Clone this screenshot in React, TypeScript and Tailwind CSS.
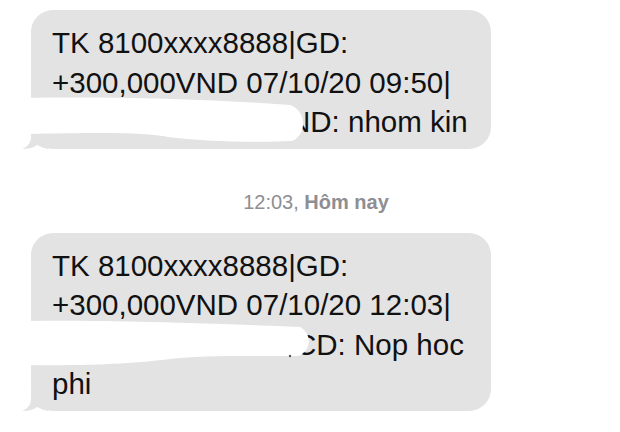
import React from "react";

const font = { fontFamily: '"Liberation Sans", Arial, sans-serif' };

function Tail() {
  return (
    <svg className="absolute left-[-9px] bottom-0 w-[26px] h-[20px]" viewBox="0 0 26 20">
      <path d="M9 0 L9 8 C9 14 5 18 0 20 C6 20 11 19 15 16 C19 18 22 19 26 20 L26 0 Z" fill="#e3e3e4" />
    </svg>
  );
}

function Bubble({ lines, blob, offsetY, speck }: { lines: React.ReactNode[]; blob: string; offsetY: number; speck?: [number, number] }) {
  return (
    <div className="relative w-[460px] rounded-[22px] bg-[#e3e3e4] pl-[21px] pr-4 pt-[13px] pb-[7px] text-[29.5px] text-[#111]">
      <Tail />
      {lines.map((l, i) => (
        <div key={i} className="relative h-[39.5px] leading-[39.5px] whitespace-nowrap">
          {l}
        </div>
      ))}
      {/* white scribble hiding the name */}
      <svg
        className="absolute left-[-31px] w-[620px] h-[432px] pointer-events-none"
        style={{ top: -offsetY }}
        viewBox="0 0 620 432"
      >
        <path d={blob} fill="#ffffff" />
        {speck && <circle cx={speck[0]} cy={speck[1]} r="1.2" fill="#555" />}
      </svg>
    </div>
  );
}

export default function App() {
  return (
    <div className="w-[620px] h-[432px] bg-white overflow-hidden pl-[31px] pt-[10px]" style={font}>
      <Bubble
        offsetY={10}
        lines={[
          "TK 8100xxxx8888|GD:",
          "+300,000VND 07/10/20 09:50|",
          <span className="pl-[237px]">ND: nhom kin</span>,
        ]}
        blob="M 28 98 C 80 97, 140 98, 170 99 C 210 100, 250 102, 290 105 C 306 110, 308 134, 292 141 C 250 143, 200 141, 168 137 C 150 133, 110 132, 28 134 Z"
      />

      <div className="mt-[41px] mb-[19px] flex justify-center pr-[19px] text-[20px] leading-[24px] text-[#8e8e93]">
        <span>12:03, </span>
        <span className="font-semibold">&nbsp;Hôm nay</span>
      </div>

      <Bubble
        offsetY={230}
        speck={[290, 353]}
        lines={[
          "TK 8100xxxx8888|GD:",
          "+300,000VND 07/10/20 12:03|",
          <span className="pl-[243px]">CD: Nop hoc</span>,
          "phi",
        ]}
        blob="M 28 318 C 100 317, 200 320, 300 324 C 312 330, 312 348, 298 353 C 250 353, 200 352, 170 356 C 140 360, 90 363, 28 362 Z"
      />
    </div>
  );
}
